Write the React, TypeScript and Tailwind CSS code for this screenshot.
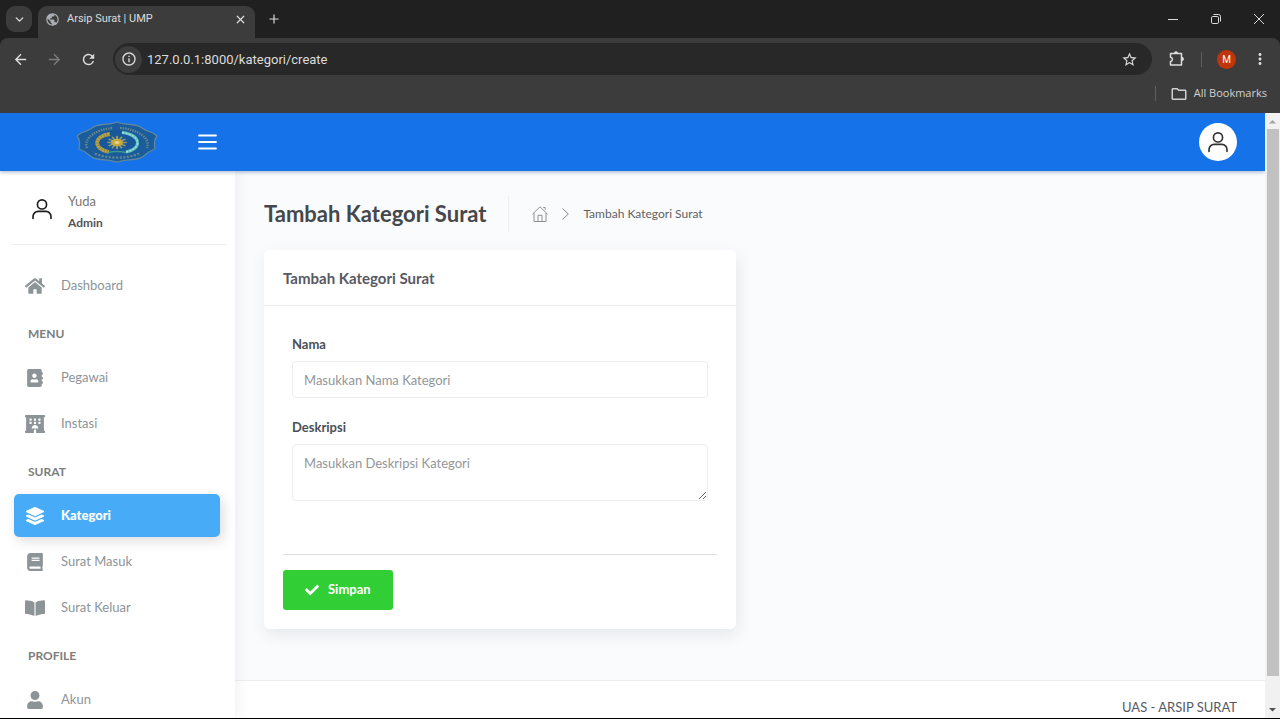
import type { ReactNode } from "react";
import {
  FaAddressBook,
  FaBook,
  FaBookOpen,
  FaCheck,
  FaHome,
  FaHotel,
  FaLayerGroup,
  FaUser,
} from "react-icons/fa";
import {
  MdArrowBack,
  MdArrowForward,
  MdInfoOutline,
  MdMoreVert,
  MdOutlineFolder,
  MdPublic,
  MdRefresh,
  MdStarBorder,
} from "react-icons/md";
import { ChevronDown, Plus, X } from "lucide-react";

function PersonIcon({ className }: { className: string }) {
  return (
    <svg viewBox="0 0 24 24" className={className} fill="none" stroke="currentColor" strokeWidth="1.8" strokeLinecap="round" aria-hidden="true">
      <circle cx="12" cy="7" r="5" />
      <path d="M2.2 22.4v-2.2a5.6 5.6 0 0 1 5.6-5.6h8.4a5.6 5.6 0 0 1 5.6 5.6v2.2" />
    </svg>
  );
}

const rays = Array.from({ length: 12 }, (_, i) => i * 30);

function Logo() {
  return (
    <svg viewBox="0 0 82 42" className="h-[42px] w-[82px]" role="img" aria-label="UMP">
      <path
        d="M41 1 Q46 3 55 3.500 Q62 4 66 7 Q70 10 77 12 L81 15 Q78 19 78.500 24 L79 28 Q73 30 69 34 Q65 38 57 38.500 Q48 39 41 41 Q34 39 25 38.500 Q17 38 13 34 Q9 30 3 28 L3.500 24 Q4 19 1 15 L5 12 Q12 10 16 7 Q20 4 27 3.500 Q36 3 41 1 Z"
        fill="#1b5c9c"
        stroke="#5f87a0"
        strokeWidth="1.3"
        strokeLinejoin="round"
      />
      <path d="M11 27 C7 16 22 8 37 7" fill="none" stroke="#8a9f86" strokeWidth="2.4" strokeDasharray="1.500 1" opacity=".65" />
      <path d="M44 7 C60 8 75 16 71 27" fill="none" stroke="#8a9f86" strokeWidth="2.4" strokeDasharray="1.500 1" opacity=".65" />
      <path d="M19 32.500 C30 38 52 38 63 32.500" fill="none" stroke="#8a9f86" strokeWidth="2.4" strokeDasharray="2 1.6" opacity=".65" />
      <ellipse cx="41" cy="21.5" rx="23" ry="12" fill="#17579a" />
      <path d="M34 13 C17 15 17 28 33 31" fill="none" stroke="#b9a246" strokeWidth="3.8" />
      <path d="M34 13 C17 15 17 28 33 31" fill="none" stroke="#6f7c57" strokeWidth="3.8" strokeDasharray=".6 2.2" />
      <path d="M46 11.5 C66 14 66 28 50 31" fill="none" stroke="#62bfc4" strokeWidth="3" />
      <path d="M46 11.5 C66 14 66 28 50 31" fill="none" stroke="#a6e3cf" strokeWidth="1.400" strokeDasharray="2 1.4" />
      <path d="M32 31.500 Q41 29.5 50 31.500" fill="none" stroke="#3f9a8d" strokeWidth="1.3" />
      <g stroke="#8f9a70" strokeWidth="1.500">
        {rays.map((a) => (
          <line key={a} x1="41" y1="21.5" x2="41" y2="14.5" transform={`translate(41 21.5) scale(1.400 .95) rotate(${a}) translate(-41 -21.5)`} />
        ))}
      </g>
      <ellipse cx="41" cy="21.5" rx="6" ry="3.8" fill="#c9a83f" />
      <ellipse cx="41" cy="21.5" rx="2.6" ry="1.5" fill="#e9d07a" />
    </svg>
  );
}

function BrowserBar() {
  return (
    <header className="shrink-0 bg-[#202020] font-['Roboto',sans-serif] text-[#dcdcdc]">
      <div className="flex h-[38px] items-stretch">
        <button aria-label="Search tabs" className="mt-[6px] ml-[6px] grid h-[26px] w-[26px] place-items-center rounded-[9px] bg-[#3c3c3c]">
          <ChevronDown size={13} strokeWidth={2.6} />
        </button>
        <div className="mt-[6px] ml-[6px] flex w-[217px] items-center rounded-t-[9px] bg-[#3c3c3c] pr-2 pb-[5px] pl-[7px]">
          <MdPublic size={15} className="text-[#a8adb3]" />
          <span className="ml-[7px] flex-1 text-[11px]">Arsip Surat | UMP</span>
          <button aria-label="Close tab">
            <X size={13} strokeWidth={2.2} />
          </button>
        </div>
        <button aria-label="New tab" className="ml-3">
          <Plus size={14} strokeWidth={2} />
        </button>
        <div className="ml-auto flex">
          <button aria-label="Minimize" className="grid w-[43px] place-items-center">
            <svg viewBox="0 0 10 10" className="h-[10px] w-[10px]" stroke="currentColor"><path d="M0 5.5h10" /></svg>
          </button>
          <button aria-label="Restore" className="grid w-[43px] place-items-center">
            <svg viewBox="0 0 10 10" className="h-[10px] w-[10px]" fill="none" stroke="currentColor">
              <rect x=".5" y="2.5" width="7" height="7" rx="1.3" />
              <path d="M2.5 .5h5a2 2 0 0 1 2 2v5" />
            </svg>
          </button>
          <button aria-label="Close" className="grid w-[43px] place-items-center">
            <svg viewBox="0 0 10 10" className="h-[10px] w-[10px]" stroke="currentColor"><path d="M0 0l10 10M10 0L0 10" /></svg>
          </button>
        </div>
      </div>
      <div className="h-[75px] rounded-t-lg bg-[#3c3c3c] pt-[5px]">
        <div className="flex items-center">
          <div className="flex w-[113px] items-center justify-between pr-4 pl-3">
            <button aria-label="Back"><MdArrowBack size={17} /></button>
            <button aria-label="Forward" className="text-[#7b7b7b]"><MdArrowForward size={17} /></button>
            <button aria-label="Reload"><MdRefresh size={17} /></button>
          </div>
          <div className="flex h-8 flex-1 items-center rounded-full bg-[#282828] pr-[14px] pl-[2px]">
            <button aria-label="Site information" className="grid h-[27px] w-[27px] place-items-center rounded-full bg-[#3c3c3c]">
              <MdInfoOutline size={16} />
            </button>
            <input aria-label="Address" defaultValue="127.0.0.1:8000/kategori/create" className="ml-[5px] h-5 flex-1 bg-transparent pt-px text-[13px] outline-none" />
            <button aria-label="Bookmark this page"><MdStarBorder size={17} /></button>
          </div>
          <button aria-label="Extensions" className="ml-4">
            <svg viewBox="0 0 18 18" className="h-[18px] w-[18px]" fill="none" stroke="currentColor" strokeWidth="1.500" strokeLinejoin="round" aria-hidden="true">
              <path d="M2.500 3.500h11v11.500h-11v-3.500c2.600-.4 2.600-3.900 0-4.300z" />
              <path d="M6.300 3.200a1.700 1.700 0 0 1 3.400 0zM14 7.300a1.700 1.700 0 0 1 0 3.400z" fill="currentColor" strokeWidth=".6" />
            </svg>
          </button>
          <span className="ml-[15px] h-[15px] w-px bg-[#5f5f5f]" />
          <button aria-label="Profile" className="ml-[15px] grid h-[19px] w-[19px] place-items-center rounded-full bg-[#bf360c] text-[10px] text-white">M</button>
          <button aria-label="Browser menu" className="mr-[11px] ml-[15px]"><MdMoreVert size={18} /></button>
        </div>
        <div className="flex h-[37px] items-center justify-end pr-[13px]">
          <span className="mr-[14px] h-[15px] w-px bg-[#5f5f5f]" />
          <button className="flex items-center gap-[6px] font-['Open_Sans',sans-serif] text-[11px] text-[#d0d0d0]">
            <MdOutlineFolder size={18} />
            All Bookmarks
          </button>
        </div>
      </div>
    </header>
  );
}

function NavItem({ icon, label, active = false }: { icon: ReactNode; label: string; active?: boolean }) {
  return (
    <li>
      <a
        href="#"
        aria-current={active ? "page" : undefined}
        className={
          active
            ? "flex h-[43px] items-center gap-[14px] rounded-[5px] bg-[#48abf7] pl-[10px] font-black text-white shadow-[3px_4px_12px_rgba(69,65,78,0.18)]"
            : "flex h-[43px] items-center gap-[14px] pl-[10px] text-[#8d9498]"
        }
      >
        <span className="grid w-[23px] place-items-center pr-px">{icon}</span>
        {label}
      </a>
    </li>
  );
}

function NavSection({ title, children }: { title: string; children: ReactNode }) {
  return (
    <section>
      <h4 className="h-[49px] pt-[19px] pl-[14px] text-[12px] leading-4 font-bold text-[#7d7d7d]">{title}</h4>
      <ul className="space-y-[3px]">{children}</ul>
    </section>
  );
}

function Sidebar() {
  return (
    <aside className="z-10 w-[235px] shrink-0 bg-white text-[13px] shadow-[3px_0_12px_rgba(69,65,78,0.07)]">
      <div className="mr-2 ml-[11px] flex h-[74px] items-center gap-[15px] border-b border-[#eeeeee] pl-5">
        <PersonIcon className="mt-[2px] h-[22px] w-[22px] text-[#1d1d1d]" />
        <div className="pt-2 leading-[22px] text-[#777777]">
          <p>Yuda</p>
          <p className="text-[12px] font-bold text-[#555555]">Admin</p>
        </div>
      </div>
      <nav className="pt-[19px] pr-[15px] pl-[14px]">
        <ul>
          <NavItem icon={<FaHome size={20} />} label="Dashboard" />
        </ul>
        <NavSection title="MENU">
          <NavItem icon={<FaAddressBook size={18} />} label="Pegawai" />
          <NavItem icon={<FaHotel size={20} />} label="Instasi" />
        </NavSection>
        <NavSection title="SURAT">
          <NavItem icon={<FaLayerGroup size={18} />} label="Kategori" active />
          <NavItem icon={<FaBook size={18} />} label="Surat Masuk" />
          <NavItem icon={<FaBookOpen size={20} />} label="Surat Keluar" />
        </NavSection>
        <NavSection title="PROFILE">
          <NavItem icon={<FaUser size={18} />} label="Akun" />
        </NavSection>
      </nav>
    </aside>
  );
}

function CategoryForm() {
  return (
    <form className="rounded-[5px] bg-white pb-[19px] shadow-[2px_6px_15px_rgba(69,65,78,0.1)]" onSubmit={(e) => e.preventDefault()}>
      <h2 className="border-b border-[#ebecec] pt-4 pb-[15px] pl-[19px] text-[15px] leading-6 font-bold text-[#575962]">Tambah Kategori Surat</h2>
      <div className="px-7 pt-7">
        <label htmlFor="nama" className="block text-[13px] leading-5 font-bold text-[#495057]">Nama</label>
        <input id="nama" placeholder="Masukkan Nama Kategori" className="mt-[7px] block h-[37px] w-full rounded-[4px] border border-[#ebedf2] px-[11px] text-[13px] outline-none placeholder:text-[#929699]" />
        <label htmlFor="deskripsi" className="mt-[19px] block text-[13px] leading-5 font-bold text-[#495057]">Deskripsi</label>
        <textarea id="deskripsi" placeholder="Masukkan Deskripsi Kategori" className="mt-[7px] block h-[57px] w-full rounded-[4px] border border-[#ebedf2] px-[11px] py-2 text-[13px] leading-5 outline-none placeholder:text-[#929699]" />
      </div>
      <div className="mx-[19px] mt-[53px] border-t border-[#dfdfdf] pt-[15px]">
        <button className="flex h-10 items-center gap-[9px] rounded-[3px] bg-[#31ce36] px-[22px] text-[13px] font-bold text-white">
          <FaCheck size={14} />
          Simpan
        </button>
      </div>
    </form>
  );
}

function Main() {
  return (
    <main className="flex min-w-0 flex-1 flex-col">
      <div className="px-[29px] pt-[25px] pb-[51px]">
        <div className="flex items-center">
          <h1 className="text-[22px] leading-9 font-bold text-[#45474b]">Tambah Kategori Surat</h1>
          <nav aria-label="Breadcrumb" className="ml-[22px] flex h-9 items-center border-l border-[#eceef1] pl-[23px] text-[12px] text-[#616161]">
            <a href="#" aria-label="Home">
              <svg viewBox="0 0 16 16" className="h-4 w-4" fill="none" stroke="#858585" strokeWidth=".9" strokeLinejoin="round" aria-hidden="true">
                <path d="M.5 8.2 8 .8l7.500 7.400M2 7v8.500h12V7M11.200 1.500h2v2.200M6 15.500V9.300h4v6.200" />
              </svg>
            </a>
            <svg viewBox="0 0 7 12" className="mr-[14px] ml-[14px] h-3 w-[7px]" fill="none" stroke="#858585" aria-hidden="true">
              <path d="M.5.5 6.300 6 .5 11.500" />
            </svg>
            <a href="#">Tambah Kategori Surat</a>
          </nav>
        </div>
        <div className="mt-[18px] grid grid-cols-2 gap-7">
          <CategoryForm />
        </div>
      </div>
      <footer className="flex-1 border-t border-[#eeeeee] bg-white px-7 pt-4 text-right text-[13px] leading-5 text-[#575962]">UAS - ARSIP SURAT</footer>
    </main>
  );
}

export default function App() {
  return (
    <div className="flex h-screen flex-col overflow-hidden border-b border-black bg-[#f9fbfd] font-['Lato',sans-serif]">
      <BrowserBar />
      <div className="flex min-h-0 flex-1">
        <div className="flex min-w-0 flex-1 flex-col overflow-hidden">
          <header className="z-20 flex h-[58px] shrink-0 items-center bg-[#1572e8] pr-7 pl-[76px] shadow-[0_1px_4px_rgba(30,60,110,0.4)]">
            <a href="#" aria-label="UMP home"><Logo /></a>
            <button aria-label="Toggle sidebar" className="ml-10 text-white">
              <svg viewBox="0 0 19 16" className="h-4 w-[19px]" stroke="currentColor" strokeWidth="1.800" strokeLinecap="round" aria-hidden="true">
                <path d="M1 1.500h17M1 8h17M1 14.500h17" />
              </svg>
            </button>
            <button aria-label="Account" className="ml-auto grid h-[38px] w-[38px] place-items-center rounded-full bg-white text-[#333333]">
              <PersonIcon className="h-[22px] w-[22px]" />
            </button>
          </header>
          <div className="flex min-h-0 flex-1">
            <Sidebar />
            <Main />
          </div>
        </div>
        <div aria-hidden="true" className="flex w-[15px] shrink-0 flex-col items-center bg-[#f1f1f1]">
          <svg viewBox="0 0 15 16" className="h-4 w-[15px]"><path d="M4 10.500 7.500 7l3.500 3.500z" fill="#a3a3a3" /></svg>
          <div className="w-[12px] flex-1 bg-[#c1c1c1]" />
          <div className="h-[26px]" />
          <svg viewBox="0 0 15 16" className="h-4 w-[15px]"><path d="M4 6 7.500 9.500 11 6z" fill="#505050" /></svg>
        </div>
      </div>
    </div>
  );
}
